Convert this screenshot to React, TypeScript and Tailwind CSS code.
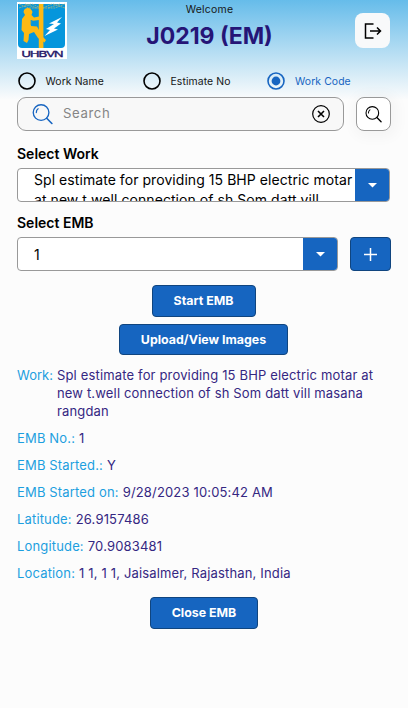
import type { ReactNode } from "react";

function Logo() {
  return (
    <svg viewBox="0 0 50 57" className="h-[57px] w-[50px] shrink-0" aria-label="UHBVN">
      <rect width="50" height="57" fill="#fff" />
      <path d="M1 2H48V42Q48 46 44 46H5Q1 46 1 42Z" fill="#0596dc" />
      <g stroke="#b9b877" strokeWidth="0.7" fill="none">
        <path d="M2 2L12 6H38L48 2M8 2L20 6M15 2L24 6M43 2L31 6M35 2L26 6M2 6L14 2M48 6L36 2" strokeDasharray="2 0.7" />
      </g>
      <rect x="21.8" y="2" width="4.6" height="44" fill="#fdb913" />
      <path d="M6.5 10Q7 6 11 6Q14 6 15.5 10L14.5 13L17 15.5L22 14.5V18L16 18.8L14.5 18L14 24L20 24.5L22 28V31L29 38L27.5 40.5L21 36L17 30L12 32L11.5 38L10 41L6.5 39L7 31L4.5 28L5 17L8 13Z" fill="#fdb913" />
      <path d="M14.2 18V23L21 23.5" fill="none" stroke="#0596dc" strokeWidth="1" />
      <path d="M45 15L32 21.5L37 22L29 27L33 28L27.5 34L41 27.5L37 26.5L44 21.5L40 20.5Z" fill="#fff" />
      <text x="4.5" y="54.7" textLength="41" lengthAdjust="spacingAndGlyphs" letterSpacing="-0.7" fontFamily="Liberation Sans, sans-serif" fontWeight="400" fontSize="9.4" stroke="#251767" strokeWidth="0.4" fill="#251767">UHBVN</text>
    </svg>
  );
}

function Magnifier({ className }: { className: string }) {
  return (
    <svg viewBox="0 0 22 22" className={className} fill="none" stroke="currentColor" strokeLinecap="round">
      <circle cx="9.5" cy="9" r="8.2" strokeWidth="1.4" />
      <path d="M15.4 14.9L20.8 20.4" strokeWidth="1.7" />
      <path d="M4.5 9Q4.5 6.2 6.4 5" strokeWidth="1.3" />
    </svg>
  );
}

function Radio({ label, selected, className }: { label: string; selected?: boolean; className: string }) {
  return (
    <div className={`flex items-center ${selected ? "text-[#1765c1]" : "text-[#151515]"} ${className}`}>
      <svg viewBox="0 0 18 18" className={`h-[18px] w-[18px] ${selected ? "" : "text-black"}`}>
        <circle cx="9" cy="9" r="8" fill="none" stroke="currentColor" strokeWidth="1.6" />
        {selected && <circle cx="9" cy="9" r="4.4" fill="currentColor" />}
      </svg>
      <span className="ml-[10px] pt-px whitespace-nowrap text-[10.4px] leading-4 tracking-[0.1px]">{label}</span>
    </div>
  );
}

function Arrow() {
  return (
    <div className="flex h-full w-[34px] shrink-0 items-center justify-center bg-[#1665c0]">
      <svg viewBox="0 0 9 5" className="h-[5px] w-[9px]"><path d="M0 0H9L4.5 4.5Z" fill="white" /></svg>
    </div>
  );
}

function Action({ children, className }: { children: ReactNode; className: string }) {
  return (
    <button className={`mx-auto flex shrink-0 items-center justify-center rounded-[4px] border border-[#10457f] bg-[#1665c0] pt-px text-[12.4px] font-bold text-white ${className}`}>
      {children}
    </button>
  );
}

const details = [
  ["EMB No.:", "1"],
  ["EMB Started.:", "Y"],
  ["EMB Started on:", "9/28/2023 10:05:42 AM"],
  ["Latitude:", "26.9157486"],
  ["Longitude:", "70.9083481"],
  ["Location:", "1 1, 1 1, Jaisalmer, Rajasthan, India"],
];

export default function App() {
  return (
    <main className="h-[708px] w-[408px] overflow-hidden bg-[#fcfcfc] bg-[linear-gradient(to_bottom,#66bcea_0px,#c7e5f5_64px,#fcfcfc_100px)] font-['Inter',sans-serif]">
      <header className="flex h-[68px] pt-0.5 pl-[17px] pr-[18px]">
        <Logo />
        <div className="flex flex-1 flex-col items-center pr-[3px]">
          <span className="text-[10.5px] leading-4 tracking-[0.2px] text-[#171717]">Welcome</span>
          <h1 className="mt-[4px] text-[23px] leading-7 font-bold text-[#251577]">J0219 (EM)</h1>
        </div>
        <button className="mt-[11px] flex h-[35px] w-[35px] items-center justify-center rounded-[8px] bg-[#f8f9fa] text-black">
          <svg viewBox="0 0 18 16" className="h-4 w-[18px]" fill="none" stroke="currentColor" strokeWidth="1.5">
            <path d="M9.5 1H1.5V15H9.5M6 8H16.5M13 4.5L16.5 8L13 11.5" />
          </svg>
        </button>
      </header>

      <div className="flex h-[29px] items-center pl-[17.5px] pb-[3px]">
        <Radio label="Work Name" className="w-[125px]" />
        <Radio label="Estimate No" className="w-[124.5px]" />
        <Radio label="Work Code" selected className="" />
      </div>

      <section className="px-[17px]">
        <div className="flex h-[34px] gap-3">
          <div className="flex w-[327px] items-center rounded-[9px] border border-[#999] bg-[#f8f8f8] pl-[14px] pr-[13px]">
            <Magnifier className="h-[21px] w-[21px] text-[#1765c1]" />
            <span className="ml-[10px] flex-1 text-[13.2px] tracking-[0.6px] text-[#858585]">Search</span>
            <svg viewBox="0 0 18 18" className="h-[18px] w-[18px]" fill="none" stroke="black">
              <circle cx="9" cy="9" r="8.3" strokeWidth="1.2" />
              <path d="M6 6L12 12M12 6L6 12" strokeWidth="1.6" />
            </svg>
          </div>
          <button className="flex w-[35px] items-center justify-center rounded-[8px] border border-[#999] bg-white text-black shadow-[2px_2px_14px_4px_rgba(0,0,0,0.035)]">
            <Magnifier className="h-[17px] w-[17px]" />
          </button>
        </div>

        <h2 className="mt-[14px] text-[14px] leading-[18px] font-semibold text-black">Select Work</h2>
        <div className="mt-[5px] flex h-[34px] w-[373px] overflow-hidden rounded-[4px] border border-[#999] bg-white">
          <div className="w-[337px] shrink-0 pt-px pl-4 text-[14px] leading-5 tracking-[0.06px] text-black">
            <div className="whitespace-nowrap">Spl estimate for providing 15 BHP electric motar</div>
            <div className="whitespace-nowrap">at new t.well connection of sh Som datt vill</div>
          </div>
          <Arrow />
        </div>

        <h2 className="mt-3 text-[14px] leading-[18px] font-semibold text-black">Select EMB</h2>
        <div className="mt-[5px] flex h-[34px] gap-3">
          <div className="flex w-[321px] items-center overflow-hidden rounded-[4px] border border-[#999] bg-white">
            <span className="flex-1 pl-4 text-[14px] text-black">1</span>
            <Arrow />
          </div>
          <button className="flex w-[41px] items-center justify-center rounded-[4px] border border-[#10457f] bg-[#1665c0]">
            <svg viewBox="0 0 13 13" className="h-[13px] w-[13px]" stroke="white" strokeWidth="1.5"><path d="M6.5 0V13M0 6.5H13" /></svg>
          </button>
        </div>
      </section>

      <div className="flex pt-[14px] pr-1 pl-[3px]"><Action className="h-8 w-[104px]">Start EMB</Action></div>
      <div className="flex pt-[7px] pr-1 pl-[3px]"><Action className="h-[31px] w-[169px]">Upload/View Images</Action></div>

      <section className="flex flex-col gap-[9px] px-[17px] pt-[11px] text-[13px] leading-[18px] tracking-[0.16px] text-[#352782]">
        <div className="flex gap-[5px]">
          <span className="w-[35px] shrink-0 tracking-[0px] text-[#1d9fdf]">Work:</span>
          <p className="whitespace-nowrap">Spl estimate for providing 15 BHP electric motar at<br />new t.well connection of sh Som datt vill masana<br />rangdan</p>
        </div>
        {details.map(([name, value]) => (
          <div key={name} className="flex gap-1 whitespace-nowrap">
            <span className="text-[#1d9fdf]">{name}</span>
            <span>{value}</span>
          </div>
        ))}
      </section>

      <div className="flex pt-[15px]"><Action className="h-8 w-[108px]">Close EMB</Action></div>
    </main>
  );
}
